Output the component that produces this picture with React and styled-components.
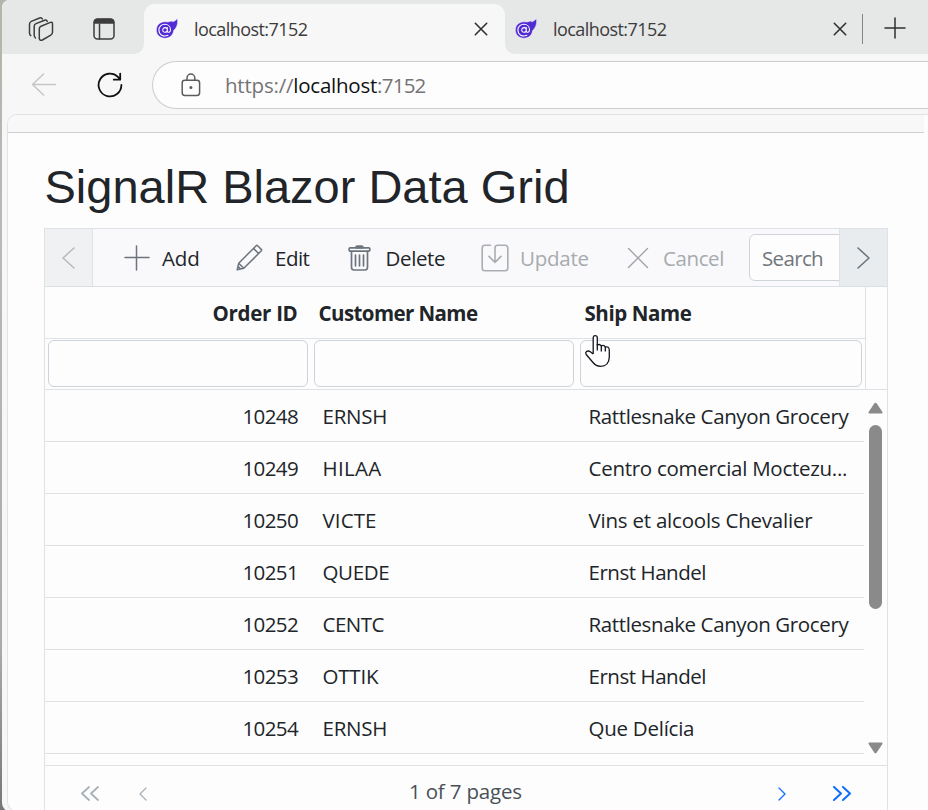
import React from 'react';
import styled, { createGlobalStyle } from 'styled-components';

const GlobalStyle = createGlobalStyle`
  * { box-sizing: border-box; }
  body { margin: 0; overflow: hidden; font-family: "Open Sans", "Noto Sans", sans-serif; color: #212529; }
`;

const Desktop = styled.div`
  width: 928px;
  height: 810px;
  padding-left: 2px;
  overflow: hidden;
  background: linear-gradient(#b4b5aa 0, #b9b9b9 30%, #aaa 80%, #777 100%);
`;
const BrowserWindow = styled.div`
  height: 812px;
  display: flex;
  flex-direction: column;
  background: #f8f7f8;
  border-radius: 8px 0 0 9px;
  overflow: hidden;
`;

/* Tab strip */
const TabStrip = styled.div`
  height: 54px;
  flex: none;
  display: flex;
  background: #f8f7f8;
`;
const StripSection = styled.div`
  height: 54px;
  display: flex;
  align-items: center;
  background: #e6e7e7;
  width: ${(p) => p.$width};
  flex: ${(p) => (p.$grow ? 1 : 'none')};
  padding: ${(p) => p.$pad || 0};
  gap: ${(p) => p.$gap || 0};
  border-radius: ${(p) => p.$radius || 0};
`;
const StripActions = styled.div`
  width: 81px;
  flex: none;
  display: flex;
  align-items: center;
  gap: 21px;
  padding: 0 0 3px 15px;
`;
const ActiveTabSlot = styled.div`
  width: 361px;
  padding-top: 4px;
  background: #e6e7e7;
`;
const ActiveTab = styled.div`
  height: 50px;
  display: flex;
  align-items: center;
  padding: 0 17px 0 12px;
  border-radius: 11px 11px 0 0;
  background: #f8f7f8;
`;
const TabContent = styled.div`
  flex: 1;
  display: flex;
  align-items: center;
  gap: 16px;
`;
const TabTitle = styled.span`
  flex: 1;
  margin-top: -1px;
  font-size: 18px;
  line-height: 26px;
  letter-spacing: -0.56px;
  color: #3c3c3c;
`;
const StripDivider = styled.div`
  width: 1px;
  height: 30px;
  margin-top: 3px;
  background: #858786;
`;

/* Address row */
const AddressRow = styled.div`
  height: 60px;
  flex: none;
  display: flex;
  align-items: flex-start;
  padding: 7px 0 0 29px;
`;
const NavIcons = styled.div`
  width: 121px;
  height: 48px;
  display: flex;
  align-items: center;
  gap: 40px;
`;
const AddressBar = styled.div`
  flex: 1;
  height: 48px;
  display: flex;
  align-items: center;
  gap: 24px;
  padding-left: 28px;
  border: 1.5px solid #cdcdce;
  border-right: 0;
  border-radius: 24px 0 0 24px;
  background: #fdfdfd;
`;
const Url = styled.div`
  font-size: 20.5px;
  line-height: 28px;
  color: #747474;
  letter-spacing: -0.2px;
`;
const UrlHost = styled.span`
  color: #111;
  letter-spacing: -0.24px;
`;
const UrlPort = styled.span`
  letter-spacing: -0.75px;
`;

/* Page */
const PageFrame = styled.div`
  flex: 1;
  min-height: 0;
  display: flex;
  flex-direction: column;
  margin-left: 5px;
  border: 1px solid #e4e1e3;
  border-right: 0;
  border-radius: 10px 0 0 10px;
  background: #fdfdfd;
  overflow: hidden;
`;
const PageTopBar = styled.div`
  height: 18px;
  flex: none;
  margin-right: 4px;
  border-bottom: 1px solid #d0cfd0;
  background: #f8f8f8;
`;
const Content = styled.main`
  flex: 1;
  min-height: 0;
  padding: 26px 40px 0 36px;
`;
const Title = styled.h1`
  margin: 0 0 13px;
  padding-left: 0.5px;
  font: 400 47px/56px "Liberation Sans", Arial, sans-serif;
  color: #212529;
  white-space: nowrap;
`;

/* Grid */
const GridFrame = styled.section`
  width: 844px;
  height: 640px;
  border: 1px solid #dee2e6;
`;
const Toolbar = styled.div`
  height: 58px;
  display: flex;
  border-bottom: 1px solid #dadfe4;
  background: #f9f9fb;
`;
const ScrollNav = styled.div`
  width: 48px;
  flex: none;
  display: flex;
  align-items: center;
  justify-content: center;
  background: ${(p) => (p.$muted ? '#f0f1f3' : '#e9ecef')};
  border: 0 solid #dee2e6;
  border-width: ${(p) => (p.$muted ? '0 1px 0 0' : '0 0 0 1px')};
`;
const ToolbarItems = styled.div`
  flex: 1;
  display: flex;
  align-items: center;
  padding-left: 31px;
  overflow: hidden;
`;
const ToolButton = styled.div`
  flex: none;
  width: ${(p) => p.$width};
  display: flex;
  align-items: center;
  gap: ${(p) => p.$gap};
  color: ${(p) => (p.$disabled ? '#a7abaf' : '#212529')};
  font-size: 20.5px;
  line-height: 28px;
  letter-spacing: ${(p) => p.$track};
`;
const SearchBox = styled.div`
  flex: none;
  width: 110px;
  height: 47px;
  margin-top: -1px;
  padding-left: 12px;
  border: 1px solid #ced4da;
  border-radius: 6px;
  background: #fdfdfd;
  font-size: 20.5px;
  line-height: 47px;
  letter-spacing: -0.66px;
  color: #70767c;
`;
const HeaderArea = styled.div`
  display: flex;
  height: 103px;
  border-bottom: 1px solid #dee2e6;
`;
const HeaderTable = styled.div`
  width: 821px;
  border-right: 1px solid #dee2e6;
`;
const Columns = styled.div`
  display: grid;
  grid-template-columns: 266px 266px 1fr;
  height: ${(p) => p.$height};
  border-bottom: ${(p) => (p.$line ? '1px solid #dee2e2' : '0')};
`;
const HeaderCell = styled.div`
  padding: 0 13.5px 0 7.5px;
  font-size: 20.5px;
  font-weight: 700;
  line-height: 52px;
  text-align: ${(p) => p.$align || 'left'};
  letter-spacing: ${(p) => p.$track};
  white-space: nowrap;
`;
const FilterCell = styled.div`
  padding: 1px 3px;
`;
const FilterInput = styled.input`
  display: block;
  width: 100%;
  height: 47px;
  border: 1px solid #ced2dc;
  border-radius: 6px;
  background: #fdfdfd;
`;
const BodyArea = styled.div`
  height: 376px;
  display: flex;
  border-bottom: 1px solid #dee2e2;
`;
const Rows = styled.div`
  width: 819px;
`;
const Cell = styled.div`
  padding: 1px 13px 0 11.5px;
  font-size: 20.5px;
  line-height: 51px;
  text-align: ${(p) => p.$align || 'left'};
  letter-spacing: ${(p) => p.$track};
  white-space: nowrap;
`;
const ScrollBar = styled.div`
  flex: 1;
  display: flex;
  flex-direction: column;
  align-items: center;
  padding: 12px 0 11px;
`;
const ScrollThumb = styled.div`
  width: 13px;
  height: 184px;
  margin: 11px 0 auto;
  border-radius: 7px;
  background: #8a8a8a;
`;
const Pager = styled.div`
  height: 55px;
  display: grid;
  grid-template-columns: 58px 270px 369px 55px 1fr;
  align-items: center;
  padding-left: 36px;
  color: #495057;
`;
const PagerText = styled.span`
  margin-top: -6px;
  font-size: 20.5px;
  line-height: 28px;
  letter-spacing: -0.17px;
`;
const Pointer = styled.svg`
  position: absolute;
  left: 584px;
  top: 334px;
`;

const IconSvg = styled.svg`
  display: block;
  flex: none;
  fill: none;
  stroke-linecap: round;
  stroke-linejoin: round;
`;

const Icon = ({ w, h, color = '#6c757d', sw = 1.5, children }) => (
  <IconSvg width={w} height={h} viewBox={`0 0 ${w} ${h}`} stroke={color} strokeWidth={sw}>
    {children}
  </IconSvg>
);

const WorkspacesIcon = () => (
  <Icon w={26} h={26} color="#3d3d3d">
    <path d="M2.8 19.6 Q1.5 18.8 1.5 17 V8.3 Q1.5 6.2 3.3 5.4 L11.6 2 Q13.6 1.3 14.4 3" />
    <path d="M7.5 22 Q6.2 21 6.2 19.3 V10.2 Q6.2 8.4 8 7.6 L16.6 4.3 Q18.6 3.6 19.3 5.4" />
    <path d="M13 10.2 L22.4 6.4 Q24.5 5.7 24.5 8 V16.3 Q24.5 18.2 22.8 19.1 L14.4 24 Q11.6 25 11.3 22.3 V12.7 Q11.3 10.9 13 10.2 Z" />
  </Icon>
);

const SidebarTabsIcon = () => (
  <Icon w={22} h={22} color="#3d3d3d">
    <rect x="1" y="1" width="20" height="20" rx="3.5" />
    <path d="M1.5 5 V4 Q1.5 1.5 4 1.5 H18 Q20.5 1.5 20.5 4 V5 Z" fill="#3d3d3d" />
    <path d="M6.5 6 V21" />
  </Icon>
);

const BlazorLogo = () => (
  <IconSvg width="22" height="22" viewBox="0 0 22 22">
    <path d="M21.4 0.6 C22.2 6 20.8 9.2 17.6 12.6 C17 17.2 13.6 20.2 9 20.2 C3.9 20.2 0.4 16.7 0.4 12 C0.4 7.4 4 3.9 8.6 3.8 C10.6 3.8 11.6 4.2 12.8 3.8 L17 2.7 L16.4 3.9 C18.6 3.4 20.3 2.2 21.4 0.6 Z"
      fill="#512bd4" stroke="#f6f3ff" strokeWidth="0.5" />
    <path d="M11.9 17.3 C7.3 19.4 2.9 16.6 2.9 12.1 C2.9 8.6 5.6 6.3 8.8 6.3 C12 6.3 14.5 8.5 14.5 11.7 C14.5 14.7 11.6 14.9 11.3 13.2 V9.6 M11.3 11.9 A2.3 2.3 0 1 1 6.7 11.9 A2.3 2.3 0 1 1 11.3 11.9"
      stroke="#fff" strokeWidth="1.05" />
  </IconSvg>
);

const CloseIcon = () => (
  <Icon w={14} h={14} color="#303030" sw={1.6}><path d="M1.3 1.3 L12.7 12.7 M12.7 1.3 L1.3 12.7" /></Icon>
);

const Chevron = ({ w, h, color, sw, left, double }) => {
  const tip = double ? w / 2 - 1 : w - 1;
  const one = left ? `M${tip} 1 L1 ${h / 2} L${tip} ${h - 1}` : `M1 1 L${tip} ${h / 2} L1 ${h - 1}`;
  return (
    <Icon w={w} h={h} color={color} sw={sw}>
      <path d={one} />
      {double && <path d={one} transform={`translate(${w / 2} 0)`} />}
    </Icon>
  );
};

const AddIcon = () => <Icon w={26} h={26}><path d="M1 12.5 H25 M12.5 1 V25" /></Icon>;
const EditIcon = () => (
  <Icon w={27} h={27}>
    <path d="M1.2 25.8 L2.7 19.2 L20.2 1.7 Q20.9 1 21.6 1.7 L25.3 5.4 Q26 6.1 25.3 6.8 L7.8 24.3 Z M17.5 4.4 L22.6 9.5 M2.7 19.2 L7.8 24.3 M2.2 22.6 L4.4 24.8" />
  </Icon>
);
const DeleteIcon = () => (
  <Icon w={23} h={26} sw={1.7}>
    <path d="M8 2.6 Q8 1 9.5 1 H13.5 Q15 1 15 2.6 Z" fill="#6c757d" />
    <rect x="1.2" y="2.8" width="20.6" height="3.3" rx="1" />
    <path d="M3.5 6.5 V22.3 Q3.5 25 6.2 25 H16.8 Q19.5 25 19.5 22.3 V6.5 M7.5 10 V20.8 M11.5 10 V20.8 M15.5 10 V20.8" />
  </Icon>
);
const UpdateIcon = () => (
  <Icon w={28} h={28} color="#a9aeb2" sw={1.6}>
    <path d="M9.5 1.2 H4 Q1.2 1.2 1.2 4 V24 Q1.2 26.8 4 26.8 H24 Q26.8 26.8 26.8 24 V4 Q26.8 1.2 24 1.2 H16.5 Q14 1.2 14 4 V17.8 M8 12.4 L14 18.4 L20 12.4" />
  </Icon>
);
const CancelIcon = () => (
  <Icon w={22} h={22} color="#a0a4a8" sw={1.4}><path d="M1.5 1.5 L20.5 20.5 M20.5 1.5 L1.5 20.5" /></Icon>
);
const BackIcon = () => (
  <Icon w={26} h={24} color="#c6c6c6"><path d="M24.5 11.5 H1.5 M12.5 1 L1.5 11.5 L12.5 22" /></Icon>
);
const ReloadIcon = () => (
  <Icon w={26} h={26} color="#111" sw={1.8}>
    <path d="M24.4 13 A11.4 11.4 0 1 1 20.9 4.8 L23 7.2 M23.2 1.6 V7.7 H16.8" />
  </Icon>
);
const LockIcon = () => (
  <Icon w={20} h={24} color="#5c5c5c">
    <rect x="1.2" y="7.2" width="17.4" height="15.2" rx="2.6" />
    <path d="M6 7 V5 A3.9 3.9 0 0 1 13.8 5 V7" />
    <circle cx="9.9" cy="14.5" r="0.8" fill="#5c5c5c" />
  </Icon>
);
const PlusIcon = () => (
  <Icon w={22} h={22} color="#303030"><path d="M1 11 H21 M11 1 V21" /></Icon>
);
const ScrollArrow = ({ down }) => (
  <svg width="15" height="12" viewBox="0 0 15 12" fill="#8a8a8a">
    <path d={down ? 'M1.2 0.5 H13.8 Q15 .8 14.4 2 L8.6 10.7 Q7.5 12 6.4 10.7 L.6 2 Q0 .8 1.2 .5 Z'
      : 'M1.2 11.5 H13.8 Q15 11.2 14.4 10 L8.6 1.3 Q7.5 0 6.4 1.3 L.6 10 Q0 11.2 1.2 11.5 Z'} />
  </svg>
);

const rows = [
  ['10248', 'ERNSH', 'Rattlesnake Canyon Grocery', '-0.22px', '-0.38px'],
  ['10249', 'HILAA', 'Centro comercial Moctezu...', '0.3px', '-0.27px'],
  ['10250', 'VICTE', 'Vins et alcools Chevalier', '0.1px', '-0.22px'],
  ['10251', 'QUEDE', 'Ernst Handel', '-0.38px', '-0.46px'],
  ['10252', 'CENTC', 'Rattlesnake Canyon Grocery', '-0.48px', '-0.38px'],
  ['10253', 'OTTIK', 'Ernst Handel', '-0.2px', '-0.46px'],
  ['10254', 'ERNSH', 'Que Delícia', '-0.22px', '-0.25px'],
];

export default function App() {
  return (
    <Desktop>
      <GlobalStyle />
      <BrowserWindow>
        <TabStrip>
          <StripSection $width="142px" $pad="4px 0 0 26px" $gap="39px" $radius="0 0 10px 0">
            <WorkspacesIcon />
            <SidebarTabsIcon />
          </StripSection>
          <ActiveTabSlot>
            <ActiveTab>
              <TabContent><BlazorLogo /><TabTitle>localhost:7152</TabTitle><CloseIcon /></TabContent>
            </ActiveTab>
          </ActiveTabSlot>
          <StripSection $grow $pad="4px 0 0 10px" $radius="0 0 0 10px">
            <TabContent><BlazorLogo /><TabTitle>localhost:7152</TabTitle><CloseIcon /></TabContent>
            <StripActions>
              <StripDivider />
              <PlusIcon />
            </StripActions>
          </StripSection>
        </TabStrip>

        <AddressRow>
          <NavIcons><BackIcon /><ReloadIcon /></NavIcons>
          <AddressBar>
            <LockIcon />
            <Url>https://<UrlHost>localhost</UrlHost><UrlPort>:7152</UrlPort></Url>
          </AddressBar>
        </AddressRow>

        <PageFrame>
          <PageTopBar />
          <Content>
            <Title>SignalR Blazor Data Grid</Title>
            <GridFrame>
              <Toolbar>
                <ScrollNav $muted><Chevron left w={13} h={22} color="#b5b9bd" sw={1.5} /></ScrollNav>
                <ToolbarItems>
                  <ToolButton $width="112px" $gap="12px" $track="-0.1px"><AddIcon />Add</ToolButton>
                  <ToolButton $width="112px" $gap="12px" $track="-0.5px"><EditIcon />Edit</ToolButton>
                  <ToolButton $width="133px" $gap="14.5px" $track="-0.38px"><DeleteIcon />Delete</ToolButton>
                  <ToolButton $width="146px" $gap="11px" $track="-0.25px" $disabled><UpdateIcon />Update</ToolButton>
                  <ToolButton $width="122px" $gap="14px" $track="-0.4px" $disabled><CancelIcon />Cancel</ToolButton>
                  <SearchBox>Search</SearchBox>
                </ToolbarItems>
                <ScrollNav><Chevron w={13} h={22} color="#6c757d" sw={1.6} /></ScrollNav>
              </Toolbar>
              <HeaderArea>
                <HeaderTable>
                  <Columns $height="52px" $line>
                    <HeaderCell $align="right" $track="-0.3px">Order ID</HeaderCell>
                    <HeaderCell $track="-0.58px">Customer Name</HeaderCell>
                    <HeaderCell $track="-0.42px">Ship Name</HeaderCell>
                  </Columns>
                  <Columns $height="50px">
                    <FilterCell><FilterInput aria-label="Order ID" /></FilterCell>
                    <FilterCell><FilterInput aria-label="Customer Name" /></FilterCell>
                    <FilterCell><FilterInput aria-label="Ship Name" /></FilterCell>
                  </Columns>
                </HeaderTable>
              </HeaderArea>
              <BodyArea>
                <Rows>
                  {rows.map(([id, customer, ship, customerTrack, shipTrack]) => (
                    <Columns key={id} $height="52px" $line>
                      <Cell $align="right" $track="-0.6px">{id}</Cell>
                      <Cell $track={customerTrack}>{customer}</Cell>
                      <Cell $track={shipTrack}>{ship}</Cell>
                    </Columns>
                  ))}
                </Rows>
                <ScrollBar>
                  <ScrollArrow />
                  <ScrollThumb />
                  <ScrollArrow down />
                </ScrollBar>
              </BodyArea>
              <Pager>
                <Chevron left double w={18} h={15} color="#a9b1b8" sw={1.8} />
                <Chevron left w={8} h={14} color="#a9b1b8" sw={1.3} />
                <PagerText>1 of 7 pages</PagerText>
                <Chevron w={8} h={14} color="#0d6efd" sw={1.3} />
                <Chevron double w={18} h={15} color="#0d6efd" sw={2} />
              </Pager>
            </GridFrame>
          </Content>
        </PageFrame>
      </BrowserWindow>
      <Pointer width="27" height="34" viewBox="0 0 27 34" fill="#fff" stroke="#15151f" strokeWidth="1.3" strokeLinejoin="round">
        <path d="M9.2 20 V3.5 Q9.4 1.6 11.2 1.6 Q13.2 1.6 13.3 3.5 V11 Q15.6 9.6 17.3 11.8 Q20 10.5 21.3 13 Q25.3 12 25.3 16.5 V23 Q25 32.3 16.5 32.3 Q12 32.3 9 28.5 L2.2 20.5 Q1 18.8 2.5 17.5 Q4.3 16.3 6.3 17.8 L9.2 20" />
        <path d="M13.3 10 V16.5 M17.3 11.8 V17.5 M21.3 13 V17.5" fill="none" />
      </Pointer>
    </Desktop>
  );
}
